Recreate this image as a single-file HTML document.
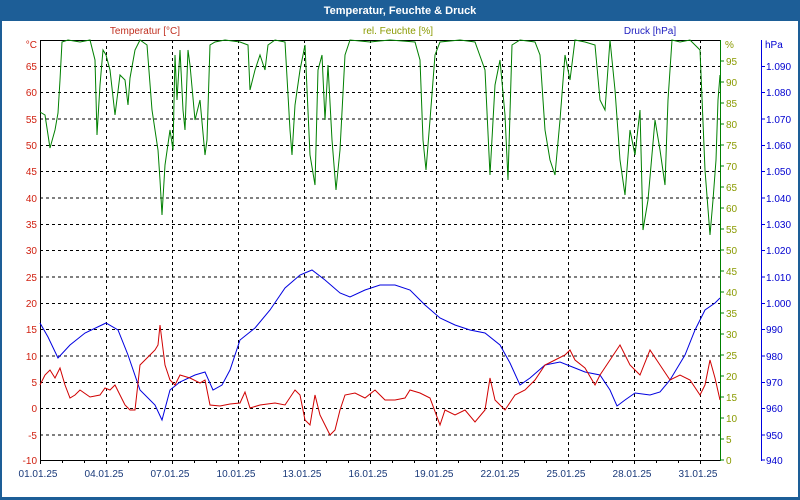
<!DOCTYPE html>
<html><head><meta charset="utf-8"><style>
html,body{margin:0;padding:0;width:800px;height:500px;overflow:hidden;background:#fff}
svg{display:block}
text{font-family:"Liberation Sans",sans-serif;font-size:10px}
</style></head><body>
<svg width="800" height="500" viewBox="0 0 800 500" xmlns="http://www.w3.org/2000/svg">
<rect x="0" y="0" width="800" height="500" fill="#1d5e97"/>
<rect x="2" y="21" width="796" height="476" fill="#fff"/>
<text x="400" y="14" text-anchor="middle" fill="#fff" font-weight="bold" style="font-size:11px">Temperatur, Feuchte &amp; Druck</text>
<text x="145" y="34" text-anchor="middle" fill="#c03020">Temperatur [°C]</text>
<text x="398" y="34" text-anchor="middle" fill="#8a9a00">rel. Feuchte [%]</text>
<text x="650" y="34" text-anchor="middle" fill="#2020c0">Druck [hPa]</text>
<g stroke="#000" stroke-dasharray="3,3" stroke-width="1">
<path d="M40 66.5H720M40 92.5H720M40 119H720M40 145.5H720M40 171.5H720M40 198H720M40 224.5H720M40 250.5H720M40 277H720M40 303.5H720M40 329.5H720M40 356H720M40 382.5H720M40 408.5H720M40 435H720"/>
<path d="M106.5 40V460M172.5 40V460M238.5 40V460M304.5 40V460M370.5 40V460M436.5 40V460M502.5 40V460M568.5 40V460M634.5 40V460M700.5 40V460"/>
</g>
<path d="M40.5 460V40.5H720M40 460.5H720" stroke="#000" fill="none"/>
<g stroke="#000"><path d="M62.5 460v3M84.5 460v3M106.5 460v4M128.5 460v3M150.5 460v3M172.5 460v4M194.5 460v3M216.5 460v3M238.5 460v4M260.5 460v3M282.5 460v3M304.5 460v4M326.5 460v3M348.5 460v3M370.5 460v4M392.5 460v3M414.5 460v3M436.5 460v4M458.5 460v3M480.5 460v3M502.5 460v4M524.5 460v3M546.5 460v3M568.5 460v4M590.5 460v3M612.5 460v3M634.5 460v4M656.5 460v3M678.5 460v3M700.5 460v4M40.5 460v4"/></g>
<path d="M720.5 40V461" stroke="#008000"/>
<path d="M761.5 40V461" stroke="#0000e0"/>
<g stroke="#008000"><path d="M720 61h4M720 82h4M720 103h4M720 124h4M720 145h4M720 166h4M720 187h4M720 208h4M720 229h4M720 250h4M720 271h4M720 292h4M720 313h4M720 334h4M720 355h4M720 376h4M720 397h4M720 418h4M720 439h4M720 460h4"/></g>
<g stroke="#0000e0"><path d="M761 66.5h4M761 92.5h4M761 119h4M761 145.5h4M761 171.5h4M761 198h4M761 224.5h4M761 250.5h4M761 277h4M761 303.5h4M761 329.5h4M761 356h4M761 382.5h4M761 408.5h4M761 435h4M761 460h4"/></g>
<g fill="#d02010" text-anchor="end">
<text x="37" y="48">°C</text><text x="37" y="70">65</text><text x="37" y="96">60</text><text x="37" y="123">55</text><text x="37" y="149">50</text><text x="37" y="175">45</text><text x="37" y="202">40</text><text x="37" y="228">35</text><text x="37" y="254">30</text><text x="37" y="281">25</text><text x="37" y="307">20</text><text x="37" y="333">15</text><text x="37" y="360">10</text><text x="37" y="386">5</text><text x="37" y="412">0</text><text x="37" y="439">-5</text><text x="37" y="464">-10</text>
</g>
<g fill="#8a9a00">
<text x="725" y="48">%</text><text x="726" y="65">95</text><text x="726" y="86">90</text><text x="726" y="107">85</text><text x="726" y="128">80</text><text x="726" y="149">75</text><text x="726" y="170">70</text><text x="726" y="191">65</text><text x="726" y="212">60</text><text x="726" y="233">55</text><text x="726" y="254">50</text><text x="726" y="275">45</text><text x="726" y="296">40</text><text x="726" y="317">35</text><text x="726" y="338">30</text><text x="726" y="359">25</text><text x="726" y="380">20</text><text x="726" y="401">15</text><text x="726" y="422">10</text><text x="726" y="443">5</text><text x="726" y="464">0</text>
</g>
<g fill="#0000d0">
<text x="765" y="48">hPa</text><text x="766" y="70">1.090</text><text x="766" y="96">1.080</text><text x="766" y="123">1.070</text><text x="766" y="149">1.060</text><text x="766" y="175">1.050</text><text x="766" y="202">1.040</text><text x="766" y="228">1.030</text><text x="766" y="254">1.020</text><text x="766" y="281">1.010</text><text x="766" y="307">1.000</text><text x="766" y="333">990</text><text x="766" y="360">980</text><text x="766" y="386">970</text><text x="766" y="412">960</text><text x="766" y="439">950</text><text x="766" y="464">940</text>
</g>
<g fill="#1a3a7a" text-anchor="middle">
<text x="38" y="477">01.01.25</text><text x="104" y="477">04.01.25</text><text x="170" y="477">07.01.25</text><text x="236" y="477">10.01.25</text><text x="302" y="477">13.01.25</text><text x="368" y="477">16.01.25</text><text x="434" y="477">19.01.25</text><text x="500" y="477">22.01.25</text><text x="566" y="477">25.01.25</text><text x="632" y="477">28.01.25</text><text x="698" y="477">31.01.25</text>
</g>
<polyline fill="none" stroke="#008000" stroke-width="1" points="40,112 45,115 50,148 55,130 58,113 60,80 62,42 68,40 80,42 90,40 95,60 97,135 100,85 103,50 106,55 110,70 115,115 120,75 125,80 128,105 130,78 135,50 140,40 147,45 152,110 158,150 160,180 162,215 165,165 170,130 173,150 175,55 177,100 180,50 183,110 185,130 188,50 190,65 195,120 200,100 205,155 207,140 210,45 215,42 225,40 240,42 248,45 250,90 255,70 260,55 265,70 268,45 275,40 285,42 290,130 292,155 295,105 300,70 305,45 310,155 315,185 318,70 322,55 325,120 328,65 332,140 336,190 340,150 345,55 350,40 370,42 390,40 415,42 420,60 423,140 426,170 430,120 435,55 440,42 460,40 475,42 485,70 490,175 495,85 500,60 505,115 508,180 512,45 520,40 535,42 540,55 545,130 550,160 555,175 560,120 565,55 570,80 575,40 585,42 595,45 600,100 605,110 610,40 615,90 620,160 625,195 630,130 635,155 640,110 643,230 648,200 655,120 660,150 665,185 668,100 672,40 680,42 690,40 700,50 705,170 710,235 713,200 716,160 718,100 720,75"/>
<polyline fill="none" stroke="#0000e0" stroke-width="1" points="40,323 48,337 58,358 70,345 85,333 106,323 118,330 128,355 140,390 155,405 162,420 170,390 180,382 195,375 205,372 213,390 222,385 230,370 240,340 255,328 270,310 285,288 300,275 312,270 325,280 340,293 350,297 365,290 380,285 395,285 410,290 425,305 440,318 455,325 470,330 485,333 500,345 510,363 520,385 530,378 545,365 560,362 575,368 585,372 600,375 610,390 617,406 625,400 635,393 650,395 660,392 670,380 685,355 695,330 705,310 715,303 720,298"/>
<polyline fill="none" stroke="#d00000" stroke-width="1" points="40,385 45,375 50,370 55,378 60,368 65,385 70,398 75,395 80,390 90,397 100,395 105,388 110,390 115,385 120,395 125,405 130,410 135,410 140,365 145,360 150,355 155,350 158,345 160,325 165,365 170,380 175,385 180,375 190,378 200,383 205,380 210,405 220,406 230,404 240,403 245,392 250,408 260,405 275,403 285,405 295,390 300,395 305,420 310,425 315,395 320,415 325,425 330,435 335,430 340,410 345,395 355,393 365,398 375,390 385,400 395,400 405,398 410,390 420,393 430,398 440,425 445,410 455,415 465,410 475,422 485,410 490,378 495,400 505,410 515,395 525,390 535,380 545,365 555,360 565,355 570,350 575,360 585,368 595,385 600,375 610,360 620,345 630,365 640,375 650,350 660,365 670,380 680,375 690,380 700,395 705,385 710,360 715,378 720,400"/>
</svg>
</body></html>
